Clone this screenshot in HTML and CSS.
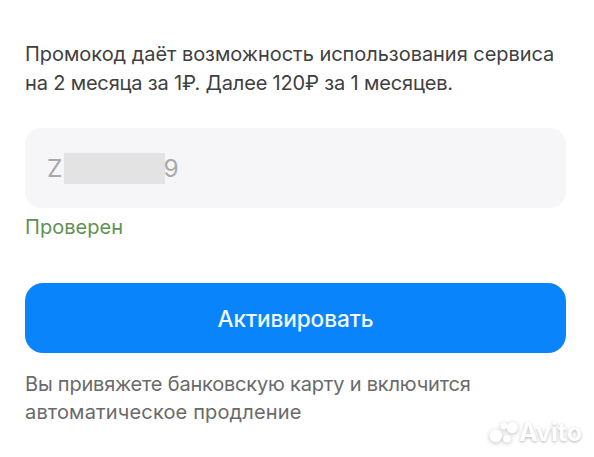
FILE: index.html
```
<!DOCTYPE html>
<html lang="ru">
<head>
<meta charset="utf-8">
<title>Промокод</title>
<link rel="stylesheet" href="styles.css">
</head>
<body>
<main class="panel">
  <p class="lead"><span class="line wide">Промокод даёт возможность использования сервиса</span><span class="line tight">на 2 месяца за 1₽. Далее 120₽ за 1 месяцев.</span></p>
  <div class="field"><span>Z</span><span class="mask"></span><span>9</span></div>
  <p class="status">Проверен</p>
  <button class="action" type="button">Активировать</button>
  <p class="note"><span class="line tighter">Вы привяжете банковскую карту и включится</span><span class="line widest">автоматическое продление</span></p>
</main>
<div class="mark">
  <svg class="mark-dots" width="40" height="32" viewBox="0 0 40 32" aria-hidden="true">
    <circle cx="20" cy="8" r="4.5"/><circle cx="31" cy="10" r="7.5"/><circle cx="9" cy="21" r="8.5"/><circle cx="24" cy="25" r="5"/>
  </svg>
  <span>Avito</span>
</div>
</body>
</html>
```
FILE: styles.css
```
* { box-sizing: border-box; }
html, body { margin: 0; height: 100%; }
body { width: 594px; height: 457px; background: #fff; overflow: hidden; position: relative; font-family: Inter, "Noto Sans", sans-serif; }
.panel { padding: 40px 28px 0 25px; display: flex; flex-direction: column; }
.line { display: block; white-space: nowrap; }
.wide { letter-spacing: -0.04px; }
.tight { letter-spacing: -0.17px; }
.tighter { letter-spacing: -0.2px; }
.widest { letter-spacing: 0.15px; }
.lead { margin: 0; font-size: 20px; line-height: 29px; color: #404040; }
.field { margin-top: 30px; height: 80px; border-radius: 16px; background: #f6f6f8; padding-left: 22px; display: flex; align-items: center; font-size: 24.5px; color: #a9a9a9; }
.mask { width: 101px; height: 31px; background: #e3e3e3; margin-left: 2px; margin-right: -2px; }
.status { margin: 7px 0 0; font-size: 20px; line-height: 24px; color: #5f9150; letter-spacing: 0.05px; }
.action { margin-top: 44px; height: 70px; border: 0; border-radius: 18px; background: #0a84fb; color: #f2f8ff; font: 500 22.6px Inter, "Noto Sans", sans-serif; letter-spacing: -0.1px; padding: 0; }
.note { margin: 17px 0 0; font-size: 20px; line-height: 28px; color: #6a6a6a; }
.mark { position: absolute; left: 489px; top: 418px; display: flex; align-items: center; color: #fff; font-size: 25px; font-weight: 700; line-height: 28px; text-shadow: 0 1px 3px rgba(0,0,0,.3); }
.mark-dots { fill: #fff; filter: drop-shadow(0 1px 2px rgba(0,0,0,.25)); width: 30px; height: 26px; }
```
